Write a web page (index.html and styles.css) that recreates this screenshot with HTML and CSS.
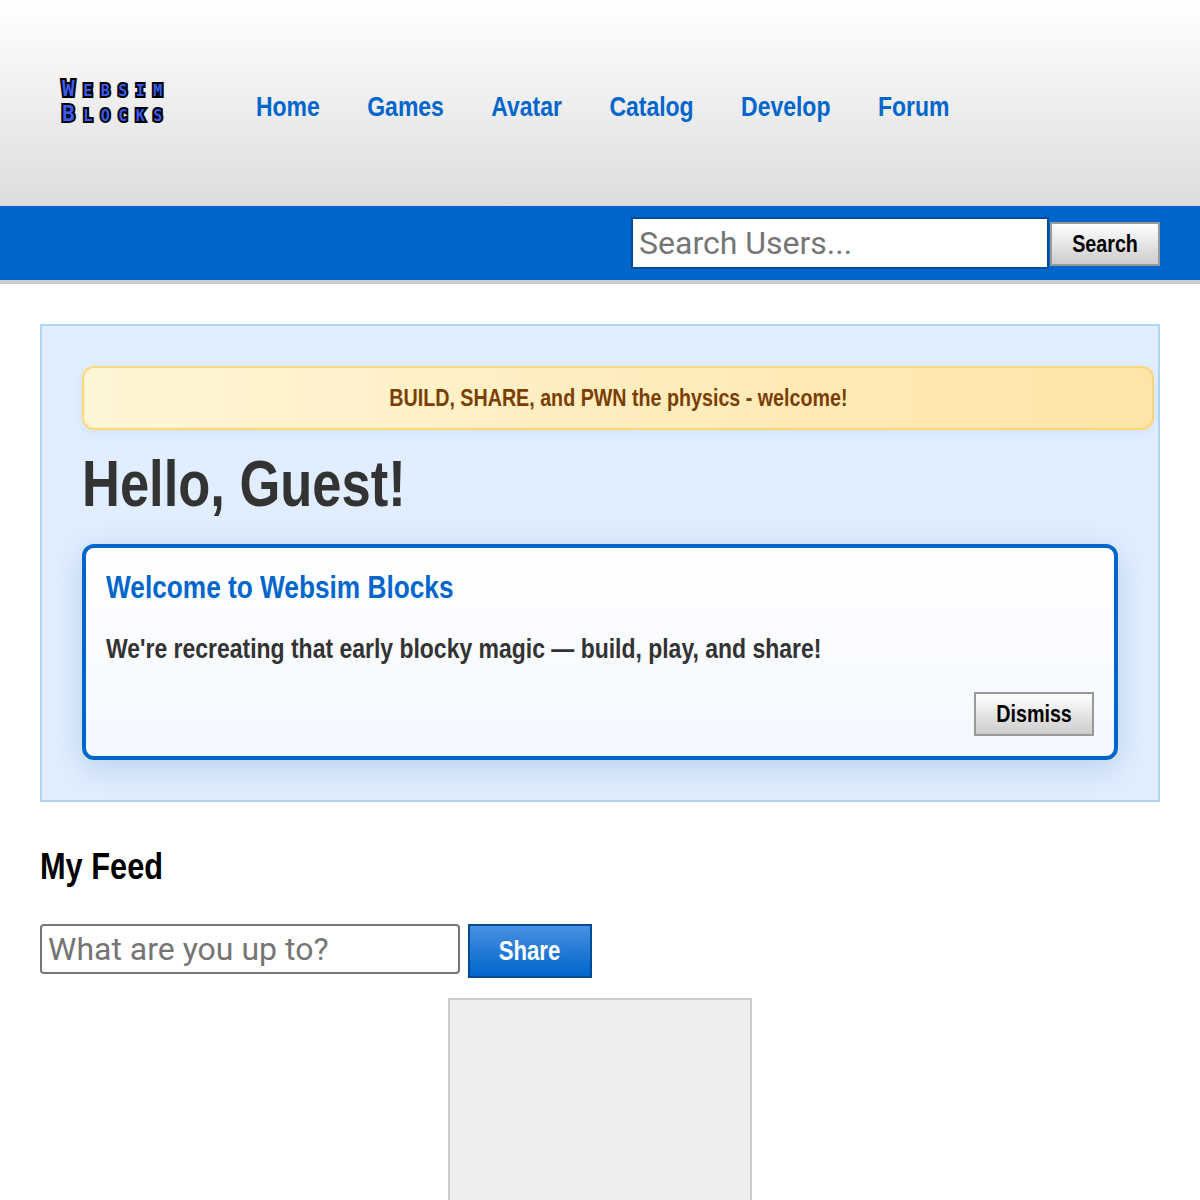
FILE: index.html
```html
<!DOCTYPE html>
<html lang="en">
<head>
    <meta charset="UTF-8">
    <title>Websim Blocks</title>
    <link rel="stylesheet" href="styles.css">
</head>
<body>
    <header class="top-header">
        <div class="logo" role="img" aria-label="Websim Blocks">
            <span>Websim</span>
            <span>Blocks</span>
        </div>
        <nav class="main-nav">
            <a href="#">Home</a>
            <a href="#">Games</a>
            <a href="#">Avatar</a>
            <a href="#">Catalog</a>
            <a href="#">Develop</a>
            <a href="#">Forum</a>
        </nav>
    </header>

    <div class="search-bar">
        <input class="search-input" type="text" placeholder="Search Users...">
        <button class="btn btn-search"><span class="narrow">Search</span></button>
    </div>

    <main class="content">
        <section class="hero">
            <div class="notice"><span class="narrow">BUILD, SHARE, and PWN the physics - welcome!</span></div>
            <h1 class="narrow-left">Hello, Guest!</h1>
            <div class="welcome-card">
                <h3 class="narrow-left">Welcome to Websim Blocks</h3>
                <p class="narrow-left">We're recreating that early blocky magic — build, play, and share!</p>
                <div class="card-actions">
                    <button class="btn btn-dismiss"><span class="narrow">Dismiss</span></button>
                </div>
            </div>
        </section>

        <section class="feed">
            <h2 class="narrow-left">My Feed</h2>
            <div class="feed-form">
                <input class="feed-input" type="text" placeholder="What are you up to?">
                <button class="btn-share"><span class="narrow">Share</span></button>
            </div>
            <div class="feed-box"></div>
        </section>
    </main>
</body>
</html>
```

FILE: styles.css
```css
html, body {
    margin: 0;
    padding: 0;
}

body {
    font-family: "Liberation Sans", Arial, sans-serif;
    font-weight: bold;
    color: #333;
    background: #fff;
    overflow-x: hidden;
}

/* no narrow face installed, so squeeze the regular bold */
.narrow {
    display: inline-block;
    transform: scaleX(0.82);
    white-space: nowrap;
}

.narrow-left {
    transform: scaleX(0.82);
    transform-origin: left center;
    white-space: nowrap;
}

/* Header */
.top-header {
    height: 206px;
    box-sizing: border-box;
    display: flex;
    align-items: center;
    padding: 0 60px;
    background: linear-gradient(#ffffff, #dddddd);
}

.logo {
    width: 194px;
    margin-left: 2px;
    margin-top: -3px;
    display: flex;
    flex-direction: column;
    font-family: "DejaVu Sans Mono", monospace;
    font-variant: small-caps;
    font-size: 21px;
    line-height: 25px;
    letter-spacing: 8.5px;
    color: #3a5cf0;
    -webkit-text-stroke: 4px #000;
    paint-order: stroke fill;
}

.main-nav {
    display: flex;
    gap: 57.9px;
    margin-top: 8px;
    transform: scaleX(0.82);
    transform-origin: left center;
}

.main-nav a {
    color: #0066cc;
    text-decoration: none;
    font-size: 28px;
}

/* Search bar */
.search-bar {
    height: 74px;
    display: flex;
    align-items: center;
    justify-content: flex-end;
    padding-right: 40px;
    background: #0066cc;
    border-bottom: 4px solid #cccccc;
}

.search-input {
    width: 418px;
    height: 52px;
    box-sizing: border-box;
    border: 2px solid #004c99;
    padding: 0 6px;
    font-family: Roboto, sans-serif;
    font-size: 32px;
    margin-right: 1px;
}

.btn {
    width: 110px;
    height: 44px;
    box-sizing: border-box;
    border: 2px solid #999999;
    background: linear-gradient(#ffffff, #cccccc);
    color: #000;
    font-family: inherit;
    font-weight: bold;
    font-size: 24px;
    padding: 0;
}

.btn-search {
    margin-top: 2px;
}

/* Main */
.content {
    padding: 40px 40px 0;
}

.hero {
    box-sizing: border-box;
    height: 478px;
    padding: 40px;
    border: 2px solid #b3d4f0;
    background: #e0eeff;
}

.notice {
    height: 64px;
    box-sizing: border-box;
    margin-right: -36px;
    display: flex;
    align-items: center;
    justify-content: center;
    border: 2px solid #ffd77a;
    border-radius: 12px;
    background: linear-gradient(90deg, #fff6d6, #ffe4a8);
    box-shadow: 0 4px 12px rgba(0, 102, 204, 0.06);
    color: #7a3e00;
    font-size: 24px;
}

.hero h1 {
    margin: 22px 0 28px;
    font-size: 64px;
    line-height: 64px;
    color: #333;
}

.welcome-card {
    box-sizing: border-box;
    height: 216px;
    padding: 20px;
    border: 4px solid #0066cc;
    border-radius: 12px;
    background: linear-gradient(#ffffff, #f4f8ff);
    box-shadow: 0 8px 32px rgba(0, 60, 130, 0.17);
}

.welcome-card h3 {
    margin: 0;
    color: #0066cc;
    font-size: 32px;
    line-height: 38px;
}

.welcome-card p {
    margin: 26px 0 0;
    font-size: 28px;
    line-height: 34px;
}

.card-actions {
    display: flex;
    justify-content: flex-end;
    margin-top: 26px;
}

.btn-dismiss {
    width: 120px;
}

/* Feed */
.feed h2 {
    margin: 42px 0 36px;
    font-size: 37.5px;
    line-height: 44px;
    color: #000;
}

.feed-form {
    display: flex;
    align-items: flex-start;
    gap: 8px;
}

.feed-input {
    width: 420px;
    height: 50px;
    box-sizing: border-box;
    border: 2px solid #767676;
    border-radius: 4px;
    padding: 0 6px;
    font-family: Roboto, sans-serif;
    font-size: 32px;
}

.btn-share {
    width: 124px;
    height: 54px;
    box-sizing: border-box;
    border: 2px solid #004c99;
    background: linear-gradient(#4a90e2, #0066cc);
    color: #fff;
    font-family: inherit;
    font-weight: bold;
    font-size: 27px;
    padding: 0;
}

.feed-box {
    box-sizing: border-box;
    width: 304px;
    height: 300px;
    margin: 20px auto 0;
    border: 2px solid #cccccc;
    background: #eeeeee;
}
```
